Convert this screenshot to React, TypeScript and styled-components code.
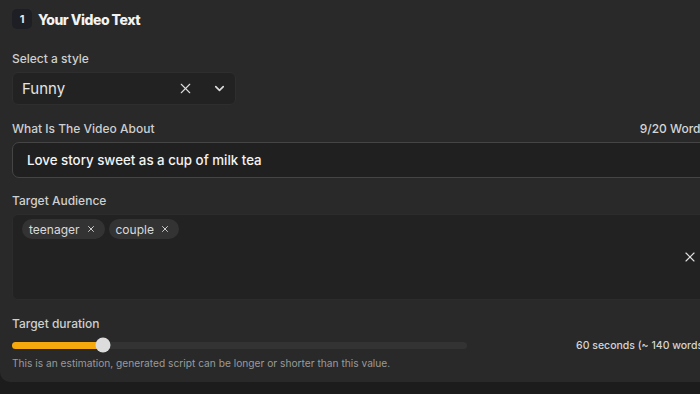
import React, { useState } from 'react';
import styled, { createGlobalStyle } from 'styled-components';
import { X, ChevronDown } from 'lucide-react';

const GlobalStyle = createGlobalStyle`
  html, body {
    margin: 0;
    padding: 0;
    background: #1c1c1c;
    overflow: hidden;
  }
  body {
    font-family: Inter, "Noto Sans", sans-serif;
    color: #e6e6e6;
  }
`;

const Card = styled.section`
  width: 719px;
  height: 382px;
  box-sizing: border-box;
  background: #292929;
  border-bottom-left-radius: 10px;
  padding: 8px 12px 0 12px;
  display: flex;
  flex-direction: column;
`;

const Header = styled.div`
  display: flex;
  align-items: center;
  gap: 6px;
  height: 22px;
`;

const StepBadge = styled.span`
  width: 20px;
  height: 20px;
  border-radius: 5px;
  background: #1d1f25;
  color: #e8e8e8;
  font-size: 11px;
  font-weight: 700;
  display: flex;
  align-items: center;
  justify-content: center;
`;

const Title = styled.h2`
  margin: 0;
  font-size: 14px;
  font-weight: 800;
  letter-spacing: -0.5px;
  color: #f2f2f2;
`;

const Field = styled.div<{ $top: number }>`
  display: flex;
  flex-direction: column;
  gap: 6px;
  margin-top: ${(p) => p.$top}px;
`;

const LabelRow = styled.div`
  display: flex;
  justify-content: space-between;
  align-items: center;
  height: 16px;
`;

const Label = styled.label`
  font-size: 12px;
  font-weight: 500;
  color: #cfcfcf;
`;

const Counter = styled.span`
  font-size: 12px;
  font-weight: 500;
  color: #d6d6d6;
`;

const SelectBox = styled.div`
  width: 224px;
  height: 33px;
  box-sizing: border-box;
  background: #222222;
  border: 1px solid #2e2e2e;
  border-radius: 6px;
  display: flex;
  align-items: center;
  padding: 0 4px 0 9px;
`;

const SelectValue = styled.span`
  flex: 1;
  font-size: 15px;
  color: #e4e4e4;
`;

const IconButton = styled.button<{ $gap?: number }>`
  width: 24px;
  height: 24px;
  margin-left: ${(p) => p.$gap ?? 0}px;
  padding: 0;
  border: none;
  background: transparent;
  color: #dcdcdc;
  display: flex;
  align-items: center;
  justify-content: center;
  cursor: pointer;
`;

const TextInput = styled.div`
  height: 36px;
  box-sizing: border-box;
  background: #202020;
  border: 1.5px solid #454545;
  border-radius: 7px;
  display: flex;
  align-items: center;
  padding: 0 14px;
  font-size: 13.3px;
  font-weight: 500;
  color: #f4f4f4;
`;

const TagsBox = styled.div`
  height: 86px;
  box-sizing: border-box;
  background: #222222;
  border: 1px solid #2c2c2c;
  border-radius: 6px;
  padding: 4px 8px 0 9px;
  display: flex;
  align-items: flex-start;
`;

const TagList = styled.div`
  display: flex;
  gap: 4px;
  flex: 1;
`;

const Tag = styled.span`
  height: 20px;
  border-radius: 10px;
  background: #333333;
  color: #dadada;
  font-size: 12px;
  display: inline-flex;
  align-items: center;
  gap: 6px;
  padding: 0 9px 0 7px;
`;

const ClearAll = styled.button`
  align-self: center;
  margin-top: -4px;
  padding: 0;
  border: none;
  background: transparent;
  color: #e0e0e0;
  display: flex;
  cursor: pointer;
`;

const SliderRow = styled.div`
  display: flex;
  align-items: center;
  height: 16px;
`;

const Track = styled.div`
  width: 455px;
  height: 7px;
  border-radius: 4px;
  background: #333333;
  position: relative;
`;

const Fill = styled.div`
  height: 100%;
  border-radius: 4px;
  background: #f5a90c;
`;

const Thumb = styled.div`
  position: absolute;
  top: 50%;
  width: 15px;
  height: 15px;
  border-radius: 50%;
  background: #dcdcdc;
  transform: translate(-50%, -50%);
`;

const SliderValue = styled.span`
  margin-left: auto;
  font-size: 10.5px;
  font-weight: 500;
  color: #d4d4d4;
  white-space: nowrap;
`;

const Hint = styled.p`
  margin: 4px 0 0 0;
  font-size: 10.2px;
  color: #9a9a9a;
`;

export default function App() {
  const [tags] = useState(['teenager', 'couple']);
  const progress = 91 / 455;

  return (
    <>
      <GlobalStyle />
      <Card>
        <Header>
          <StepBadge>1</StepBadge>
          <Title>Your Video Text</Title>
        </Header>

        <Field $top={20}>
          <LabelRow>
            <Label>Select a style</Label>
          </LabelRow>
          <SelectBox>
            <SelectValue>Funny</SelectValue>
            <IconButton>
              <X size={17} strokeWidth={1.5} />
            </IconButton>
            <IconButton $gap={10}>
              <ChevronDown size={15} strokeWidth={2.6} />
            </IconButton>
          </SelectBox>
        </Field>

        <Field $top={15}>
          <LabelRow>
            <Label>What Is The Video About</Label>
            <Counter>9/20 Words</Counter>
          </LabelRow>
          <TextInput>Love story sweet as a cup of milk tea</TextInput>
        </Field>

        <Field $top={14}>
          <LabelRow>
            <Label>Target Audience</Label>
          </LabelRow>
          <TagsBox>
            <TagList>
              {tags.map((tag) => (
                <Tag key={tag}>
                  {tag}
                  <X size={10} strokeWidth={2.2} />
                </Tag>
              ))}
            </TagList>
            <ClearAll>
              <X size={16} strokeWidth={1.7} />
            </ClearAll>
          </TagsBox>
        </Field>

        <Field $top={15}>
          <LabelRow>
            <Label>Target duration</Label>
          </LabelRow>
          <SliderRow>
            <Track>
              <Fill style={{ width: `${progress * 100}%` }} />
              <Thumb style={{ left: `${progress * 100}%` }} />
            </Track>
            <SliderValue>60 seconds (~ 140 words)</SliderValue>
          </SliderRow>
        </Field>
        <Hint>This is an estimation, generated script can be longer or shorter than this value.</Hint>
      </Card>
    </>
  );
}
